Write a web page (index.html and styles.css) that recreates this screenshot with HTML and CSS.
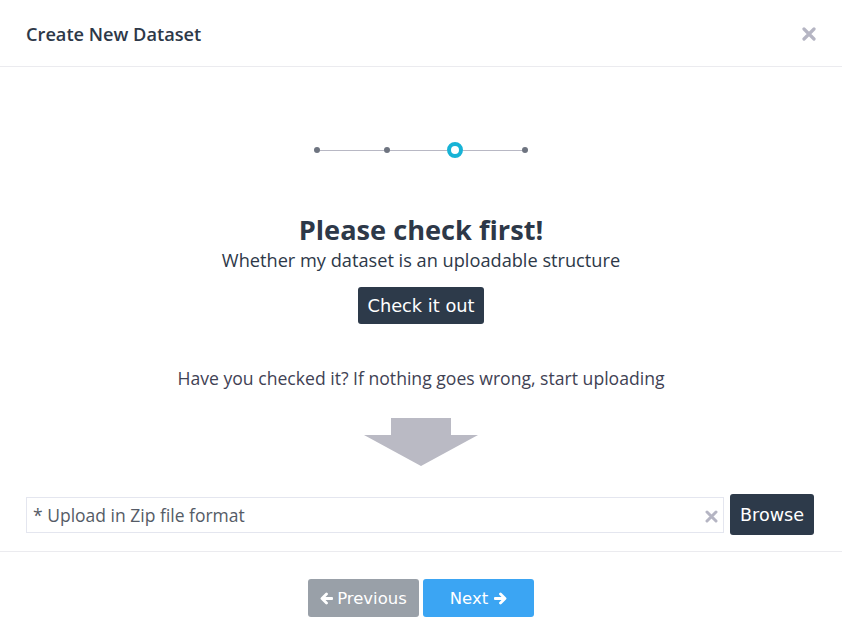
FILE: index.html
```html
<!DOCTYPE html>
<html>
<head>
<meta charset="utf-8">
<link rel="stylesheet" href="styles.css">
</head>
<body>
<div class="modal">
  <div class="modal-header">
    <h2 class="modal-title">Create New Dataset</h2>
    <svg class="close" width="14" height="14" viewBox="0 0 14 14"><path d="M2 2L12 12M12 2L2 12" stroke="#b5b5c3" stroke-width="3.2" stroke-linecap="round"/></svg>
  </div>
  <div class="modal-body">
    <div class="stepper">
      <span class="dot"></span><span class="line l1"></span>
      <span class="dot"></span><span class="line l2"></span>
      <span class="dot active"></span><span class="line l3"></span>
      <span class="dot"></span>
    </div>
    <h1 class="headline">Please check first!</h1>
    <p class="sub">Whether my dataset is an uploadable structure</p>
    <button class="btn btn-dark check">Check it out</button>
    <p class="hint">Have you checked it? If nothing goes wrong, start uploading</p>
    <svg class="arrow" width="114" height="48" viewBox="0 0 114 48"><polygon points="27,0 87,0 87,17 114,17 57,48 0,17 27,17" fill="#babac4"/></svg>
    <div class="upload-row">
      <div class="file-input">
        <span class="placeholder">* Upload in Zip file format</span>
        <svg class="clear" width="13" height="13" viewBox="0 0 13 13"><path d="M2 2L11 11M11 2L2 11" stroke="#b5b5c3" stroke-width="3" stroke-linecap="round"/></svg>
      </div>
      <button class="btn btn-dark browse">Browse</button>
    </div>
  </div>
  <div class="modal-footer">
    <button class="btn btn-grey"><svg class="ic" width="13" height="13" viewBox="0 0 13 13"><path d="M12 6.5H2.5M6.5 2L2 6.5L6.5 11" stroke="#fff" stroke-width="2.8" fill="none" stroke-linecap="round" stroke-linejoin="round"/></svg>Previous</button>
    <button class="btn btn-blue">Next<svg class="ic" width="13" height="13" viewBox="0 0 13 13"><path d="M1 6.5H10.5M6.5 2L11 6.5L6.5 11" stroke="#fff" stroke-width="2.8" fill="none" stroke-linecap="round" stroke-linejoin="round"/></svg></button>
  </div>
</div>
</body>
</html>
```

FILE: styles.css
```css
* { box-sizing: border-box; }
html, body { margin: 0; padding: 0; background: #fff; }
body { font-family: "Open Sans", "Noto Sans", sans-serif; color: #2f3a4a; }
.modal { width: 842px; height: 644px; display: flex; flex-direction: column; }
.modal-header {
  height: 67px; display: flex; align-items: center; justify-content: space-between;
  padding: 2px 26px 0 26px; border-bottom: 1px solid #ebebef;
}
.modal-title { margin: 0; font-size: 18.2px; font-weight: 600; color: #2d3848; }
.close { display: block; }
.modal-body { flex: 1; display: flex; flex-direction: column; align-items: center; border-bottom: 1px solid #ebebef; }
.stepper { margin-top: 75px; display: flex; align-items: center; }
.dot { width: 6px; height: 6px; border-radius: 50%; background: #6e7480; flex: none; }
.dot.active { width: 16px; height: 16px; background: #fff; border: 4px solid #17b3d6; }
.line { height: 1px; background: #b8b8c4; }
.l1 { width: 64px; }
.l2 { width: 57px; }
.l3 { width: 59px; }
.headline { margin: 56px 0 0; font-size: 27.2px; font-weight: 700; line-height: 32px; color: #2d3848; }
.sub { margin: 2px 0 0; font-size: 18.2px; line-height: 25px; color: #2d3848; font-weight: 500; }
.btn { border: none; border-radius: 3px; font-family: "DejaVu Sans", sans-serif; color: #fff; cursor: pointer; display: inline-flex; align-items: center; justify-content: center; }
.btn-dark { background: #2d3a4a; }
.check { margin-top: 14px; height: 37px; width: 126px; padding: 0; font-size: 17.8px; }
.hint { margin: 42px 0 0; font-size: 17.6px; line-height: 24px; color: #3f4254; }
.arrow { margin-top: 28px; display: block; }
.upload-row { margin-top: 28px; width: 100%; padding: 0 28px 0 26px; display: flex; align-items: center; gap: 6px; }
.file-input { flex: 1; height: 36px; border: 1px solid #e4e6ef; display: flex; align-items: center; justify-content: space-between; padding: 0 5px 0 6px; }
.placeholder { font-size: 17.5px; color: #555b66; }
.clear { display: block; margin-top: 3px; }
.browse { height: 41px; width: 84px; font-size: 17.6px; padding: 0; }
.modal-footer { height: 92px; display: flex; justify-content: center; align-items: flex-start; gap: 4px; padding-top: 27px; }
.btn-grey, .btn-blue { height: 38px; width: 111px; font-size: 16.5px; padding: 0; gap: 4px; }
.btn-grey { background: #99a0a8; }
.btn-blue { background: #3ba5f3; gap: 6px; }
.ic { display: block; }
```
